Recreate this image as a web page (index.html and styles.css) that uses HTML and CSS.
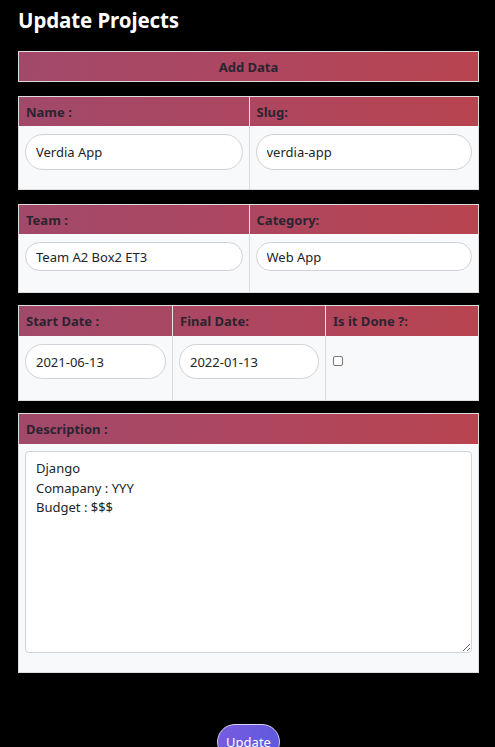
FILE: index.html
```html
<!DOCTYPE html>
<html lang="en">
<head>
<meta charset="utf-8">
<title>Update Projects</title>
<link rel="stylesheet" href="styles.css">
</head>
<body>
<main class="page">
  <h1 class="title">Update Projects</h1>

  <div class="card">
    <div class="head one"><div class="hcell center">Add Data</div></div>
  </div>

  <div class="card">
    <div class="head two">
      <div class="hcell">Name :</div>
      <div class="hcell">Slug:</div>
    </div>
    <div class="body two tall">
      <div class="bcell"><input class="field f36" type="text" value="Verdia App"></div>
      <div class="bcell"><input class="field f36" type="text" value="verdia-app"></div>
    </div>
  </div>

  <div class="card gap-small">
    <div class="head two">
      <div class="hcell">Team :</div>
      <div class="hcell">Category:</div>
    </div>
    <div class="body two short">
      <div class="bcell"><input class="field f29" type="text" value="Team A2 Box2 ET3"></div>
      <div class="bcell"><input class="field f29" type="text" value="Web App"></div>
    </div>
  </div>

  <div class="card gap-small">
    <div class="head three tall-head">
      <div class="hcell">Start Date :</div>
      <div class="hcell">Final Date:</div>
      <div class="hcell">Is it Done ?:</div>
    </div>
    <div class="body three tall64">
      <div class="bcell"><input class="field f35" type="text" value="2021-06-13"></div>
      <div class="bcell"><input class="field f35" type="text" value="2022-01-13"></div>
      <div class="bcell check-cell"><span class="check"></span></div>
    </div>
  </div>

  <div class="card last">
    <div class="head one tall-head"><div class="hcell">Description :</div></div>
    <div class="body one desc">
      <div class="bcell"><textarea class="area">Django
Comapany : YYY
Budget : $$$</textarea></div>
    </div>
  </div>

  <div class="actions">
    <button class="btn" type="button">Update</button>
  </div>
</main>
</body>
</html>
```

FILE: styles.css
```css
* { box-sizing: border-box; }

html, body {
  margin: 0;
  padding: 0;
  background: #000;
}

body {
  font-family: "Noto Sans", "Open Sans", Arial, sans-serif;
  color: #212529;
}

.page {
  padding: 0 16px 0 18px;
}

.title {
  margin: 0;
  padding-top: 5px;
  height: 51px;
  font-size: 20.5px;
  font-weight: 700;
  color: #ffffff;
  line-height: 30px;
  letter-spacing: -0.1px;
}

.card {
  border: 1px solid #dcdcdc;
  background: #f8f9fa;
  margin-bottom: 14px;
}

.card.gap-small { margin-bottom: 12px; }
.card.last { margin-bottom: 0; }

.head {
  display: grid;
  height: 29px;
  background: linear-gradient(100deg, #a1496a 0%, #ad4660 50%, #b8444f 100%);
}

.head.tall-head { height: 30px; }

.one { grid-template-columns: 1fr; }
.two { grid-template-columns: 1fr 1fr; }
.three { grid-template-columns: 1fr 1fr 1fr; }

.hcell {
  display: flex;
  align-items: center;
  padding-left: 7px;
  font-size: 13px;
  font-weight: 700;
  color: #2b2430;
}

.head .hcell + .hcell { border-left: 1px solid #e6e6e6; }

.hcell.center { justify-content: center; padding-left: 0; }

.body { display: grid; }
.body .bcell + .bcell { border-left: 1px solid #dcdcdc; }

.body.tall { height: 63px; }
.body.tall64 { height: 64px; }
.body.short { height: 58px; }
.body.desc { height: 228px; }

.bcell {
  padding: 8px 6px 0 6px;
}

.desc .bcell { padding-top: 7px; }

.field {
  display: block;
  width: 100%;
  border: 1px solid #cfd2d6;
  border-radius: 20px;
  background: #fff;
  padding: 0 0 0 10px;
  font-family: "Noto Sans", "Open Sans", Arial, sans-serif;
  font-size: 13px;
  color: #212529;
  outline: none;
}

.f36 { height: 36px; }
.f29 { height: 29px; }
.f35 { height: 35px; }

.check-cell { padding-top: 20px; padding-left: 7px; }

.check {
  display: block;
  width: 10px;
  height: 10px;
  border: 1px solid #767676;
  border-radius: 2px;
  background: #fff;
}

.area {
  display: block;
  width: 100%;
  height: 202px;
  border: 1px solid #ced4da;
  border-radius: 4px;
  background: #fff;
  padding: 7px 10px 4px;
  font-family: "Noto Sans", "Open Sans", Arial, sans-serif;
  font-size: 13px;
  line-height: 19.5px;
  color: #212529;
  resize: vertical;
  outline: none;
}

.actions {
  display: flex;
  justify-content: center;
  padding-top: 51px;
}

.btn {
  width: 63px;
  height: 36px;
  border: 1px solid #d7d2f3;
  border-radius: 18px;
  background: linear-gradient(120deg, #7a5be0 0%, #5a59de 100%);
  color: #fff;
  font-family: "Noto Sans", "Open Sans", Arial, sans-serif;
  font-size: 13px;
  padding: 0;
}
```
